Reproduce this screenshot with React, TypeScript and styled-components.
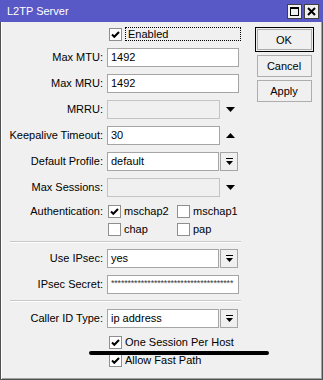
import React from 'react';
import styled, { createGlobalStyle } from 'styled-components';

const Global = createGlobalStyle`
  html, body { margin: 0; padding: 0; background: #ffffff; }
  body {
    font-family: "Liberation Sans", Arial, sans-serif;
    font-size: 11px;
    color: #000;
  }
  * { box-sizing: border-box; }
`;

const Window = styled.div`
  position: relative;
  width: 323px;
  height: 380px;
  display: flex;
  flex-direction: column;
  background: #f0f0f0;
`;

const TitleBar = styled.div`
  height: 22px;
  flex: 0 0 22px;
  background: #5858c6;
  color: #fff;
  display: flex;
  align-items: center;
  justify-content: space-between;
  padding: 0 4px 0 7px;
  font-size: 11px;
`;

const TitleButtons = styled.div`
  display: flex;
  gap: 2px;
  padding-top: 1px;
`;

const TitleBtn = styled.div`
  width: 15px;
  height: 15px;
  background: #f0f0f0;
  border: 1px solid #404040;
  display: flex;
  align-items: center;
  justify-content: center;
`;

const Body = styled.div`
  flex: 1;
  display: flex;
  border-left: 1px solid #505050;
  border-right: 1px solid #505050;
  border-bottom: 1px solid #505050;
  box-shadow: inset 1px 0 0 #ffffff, inset -1px -1px 0 #a0a0a0;
`;

const Form = styled.div`
  width: 245px;
  flex: 0 0 245px;
  display: flex;
  flex-direction: column;
  padding-top: 5px;
`;

const Row = styled.div<{ $top?: number; $h?: number }>`
  display: grid;
  grid-template-columns: 102px 132px;
  column-gap: 4px;
  align-items: center;
  height: ${p => p.$h ?? 20}px;
  margin-top: ${p => p.$top ?? 6}px;
`;

const Label = styled.div<{ $alignTop?: boolean }>`
  text-align: right;
  white-space: nowrap;
  align-self: ${p => (p.$alignTop ? 'start' : 'center')};
  line-height: ${p => (p.$alignTop ? '16px' : 'normal')};
`;

const Control = styled.div`
  grid-column: 2;
  display: flex;
  align-items: center;
  gap: 1px;
`;

const InputBox = styled.div<{ $w: number; $disabled?: boolean }>`
  width: ${p => p.$w}px;
  height: 19px;
  border: 1px solid ${p => (p.$disabled ? '#c4c4c4' : '#a5a5a5')};
  background: ${p => (p.$disabled ? '#f0f0f0' : '#ffffff')};
  padding-left: 3px;
  display: flex;
  align-items: center;
  overflow: hidden;
  white-space: nowrap;
`;

const Stars = styled.span`
  font-size: 9px;
  color: #3a3a3a;
  letter-spacing: -0.2px;
  margin-top: -2px;
`;

const DropBtn = styled.div`
  width: 18px;
  height: 19px;
  border: 1px solid #a5a5a5;
  background: #f0f0f0;
  display: flex;
  align-items: center;
  justify-content: center;
`;

const ArrowSlot = styled.div`
  width: 18px;
  height: 19px;
  display: flex;
  align-items: center;
  justify-content: center;
`;

const CheckLine = styled.div<{ $top?: number; $h?: number }>`
  display: grid;
  grid-template-columns: 102px 1fr;
  column-gap: 6px;
  align-items: center;
  height: ${p => p.$h ?? 16}px;
  margin-top: ${p => p.$top ?? 2}px;
  padding-right: 5px;
`;

const CheckItem = styled.label<{ $grow?: boolean; $col?: number }>`
  grid-column: ${p => p.$col ?? 2};
  display: flex;
  align-items: center;
  gap: 3px;
  ${p => (p.$grow ? 'width: 100%;' : '')}
`;

const Box = styled.span`
  width: 13px;
  height: 13px;
  flex: 0 0 13px;
  border: 1px solid #8e8f8f;
  background: #fff;
  display: flex;
  align-items: center;
  justify-content: center;
`;

const Focus = styled.span`
  flex: 1;
  height: 14px;
  border: 1px dotted #000;
  padding-left: 2px;
  display: flex;
  align-items: center;
`;

const AuthGrid = styled.div`
  grid-column: 2;
  display: grid;
  grid-template-columns: 69px 1fr;
  grid-auto-rows: 16px;
  row-gap: 2px;
  align-self: start;
  padding-left: 1px;
`;

const Separator = styled.div<{ $top: number }>`
  margin: ${p => p.$top}px 0 0 9px;
  width: 231px;
  height: 2px;
  border-top: 1px solid #c8c8c8;
  border-bottom: 1px solid #ffffff;
`;

const ButtonCol = styled.div`
  display: flex;
  flex-direction: column;
  align-items: center;
  width: 60px;
  margin-left: 8px;
  padding-top: 5px;
  gap: 3px;
`;

const Btn = styled.div<{ $default?: boolean }>`
  width: ${p => (p.$default ? 59 : 55)}px;
  height: ${p => (p.$default ? 25 : 22)}px;
  border: 1px solid ${p => (p.$default ? '#000' : '#adadad')};
  box-shadow: ${p => (p.$default ? 'inset 0 0 0 1px #f0f0f0, inset 0 0 0 2px #adadad' : 'none')};
  background: #f0f0f0;
  display: flex;
  align-items: center;
  justify-content: center;
  font-size: 11px;
`;

const Annotation = styled.div`
  position: absolute;
  left: 89px;
  top: 351px;
  width: 180px;
  height: 4px;
  background: #000;
  border-radius: 2px;
`;

const Check = () => (
  <svg width="9" height="9" viewBox="0 0 9 9">
    <path d="M1 4.5 L3.3 6.8 L8 2" stroke="#000" strokeWidth="2" fill="none" />
  </svg>
);

const CheckBox: React.FC<{ checked?: boolean }> = ({ checked }) => (
  <Box>{checked ? <Check /> : null}</Box>
);

const DownTri = () => (
  <svg width="9" height="5" viewBox="0 0 9 5">
    <path d="M0 0 H9 L4.5 5 Z" fill="#000" />
  </svg>
);

const UpTri = () => (
  <svg width="9" height="5" viewBox="0 0 9 5">
    <path d="M0 5 H9 L4.5 0 Z" fill="#000" />
  </svg>
);

const ListIcon = () => (
  <svg width="7" height="7" viewBox="0 0 7 7">
    <rect x="0" y="0" width="7" height="1" fill="#000" />
    <path d="M0 3 H7 L3.5 7 Z" fill="#000" />
  </svg>
);

const TextRow: React.FC<{ label: string; value?: string; top?: number }> = ({ label, value, top }) => (
  <Row $top={top}>
    <Label>{label}</Label>
    <Control>
      <InputBox $w={132}>{value}</InputBox>
    </Control>
  </Row>
);

const SelectRow: React.FC<{ label: string; value: string; top?: number }> = ({ label, value, top }) => (
  <Row $top={top}>
    <Label>{label}</Label>
    <Control>
      <InputBox $w={112}>{value}</InputBox>
      <DropBtn>
        <ListIcon />
      </DropBtn>
    </Control>
  </Row>
);

const ArrowRow: React.FC<{ label: string; value?: string; up?: boolean; disabled?: boolean }> = ({
  label,
  value,
  up,
  disabled,
}) => (
  <Row>
    <Label>{label}</Label>
    <Control>
      <InputBox $w={113} $disabled={disabled}>{value}</InputBox>
      <ArrowSlot>{up ? <UpTri /> : <DownTri />}</ArrowSlot>
    </Control>
  </Row>
);

export default function App() {
  return (
    <>
      <Global />
      <Window>
        <TitleBar>
          <span>L2TP Server</span>
          <TitleButtons>
            <TitleBtn>
              <svg width="9" height="9" viewBox="0 0 9 9">
                <rect x="0.5" y="0.5" width="8" height="8" fill="none" stroke="#000" />
                <rect x="0" y="0" width="9" height="2" fill="#000" />
              </svg>
            </TitleBtn>
            <TitleBtn>
              <svg width="9" height="9" viewBox="0 0 9 9">
                <path d="M1 1 L8 8 M8 1 L1 8" stroke="#000" strokeWidth="2" />
              </svg>
            </TitleBtn>
          </TitleButtons>
        </TitleBar>
        <Body>
          <Form>
            <CheckLine $top={0} $h={14}>
              <CheckItem $grow>
                <CheckBox checked />
                <Focus>Enabled</Focus>
              </CheckItem>
            </CheckLine>
            <TextRow label="Max MTU:" value="1492" />
            <TextRow label="Max MRU:" value="1492" />
            <ArrowRow label="MRRU:" disabled />
            <ArrowRow label="Keepalive Timeout:" value="30" up />
            <SelectRow label="Default Profile:" value="default" />
            <ArrowRow label="Max Sessions:" disabled />
            <Row $h={34}>
              <Label $alignTop>Authentication:</Label>
              <AuthGrid>
                <CheckItem as="div" $col={1}>
                  <CheckBox checked />
                  mschap2
                </CheckItem>
                <CheckItem as="div" $col={2}>
                  <CheckBox />
                  mschap1
                </CheckItem>
                <CheckItem as="div" $col={1}>
                  <CheckBox />
                  chap
                </CheckItem>
                <CheckItem as="div" $col={2}>
                  <CheckBox />
                  pap
                </CheckItem>
              </AuthGrid>
            </Row>
            <Separator $top={4} />
            <SelectRow label="Use IPsec:" value="yes" top={5} />
            <Row>
              <Label>IPsec Secret:</Label>
              <Control>
                <InputBox $w={132}>
                  <Stars>*************************************</Stars>
                </InputBox>
              </Control>
            </Row>
            <Separator $top={6} />
            <SelectRow label="Caller ID Type:" value="ip address" />
            <CheckLine $top={6}>
              <CheckItem>
                <CheckBox checked />
                One Session Per Host
              </CheckItem>
            </CheckLine>
            <CheckLine $top={2}>
              <CheckItem>
                <CheckBox checked />
                Allow Fast Path
              </CheckItem>
            </CheckLine>
          </Form>
          <ButtonCol>
            <Btn $default>OK</Btn>
            <Btn>Cancel</Btn>
            <Btn>Apply</Btn>
          </ButtonCol>
        </Body>
        <Annotation />
      </Window>
    </>
  );
}
